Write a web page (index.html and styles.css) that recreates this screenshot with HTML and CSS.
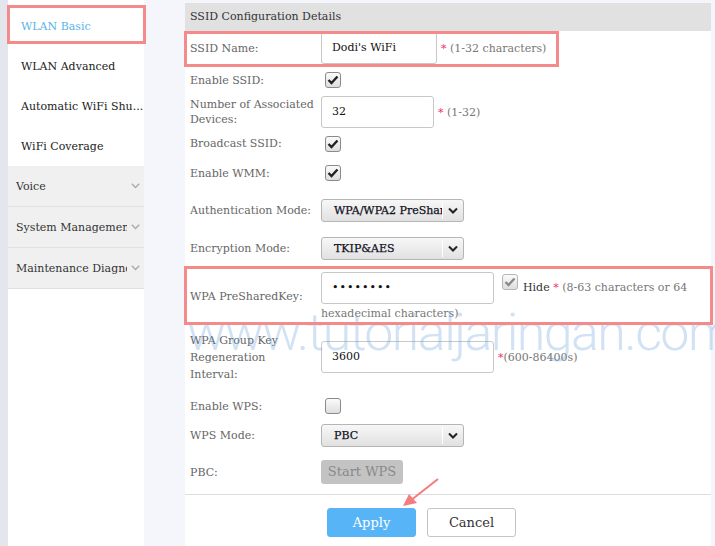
FILE: index.html
```html
<!DOCTYPE html>
<html>
<head>
<meta charset="utf-8">
<link rel="stylesheet" href="styles.css">
</head>
<body>
<div class="page">
  <div class="strip"></div>
  <aside class="sidebar">
    <ul class="sub">
      <li class="active">WLAN Basic</li>
      <li>WLAN Advanced</li>
      <li>Automatic WiFi Shu...</li>
      <li>WiFi Coverage</li>
    </ul>
    <div class="group"><span class="gname">Voice</span><svg class="gchev" width="9" height="6" viewBox="0 0 9 6"><path d="M0.8 0.8 L4.5 4.6 L8.2 0.8" fill="none" stroke="#aaa" stroke-width="1.4"/></svg></div>
    <div class="group"><span class="gname">System Management</span><svg class="gchev" width="9" height="6" viewBox="0 0 9 6"><path d="M0.8 0.8 L4.5 4.6 L8.2 0.8" fill="none" stroke="#aaa" stroke-width="1.4"/></svg></div>
    <div class="group"><span class="gname">Maintenance Diagnosis</span><svg class="gchev" width="9" height="6" viewBox="0 0 9 6"><path d="M0.8 0.8 L4.5 4.6 L8.2 0.8" fill="none" stroke="#aaa" stroke-width="1.4"/></svg></div>
  </aside>
  <main class="panel">
    <div class="panel-head">SSID Configuration Details</div>

    <div class="row r1">
      <div class="label">SSID Name:</div>
      <div class="ctl"><span class="input w116">Dodi's WiFi</span><span class="hint"><span class="req">*</span> (1-32 characters)</span></div>
    </div>
    <div class="row r2">
      <div class="label">Enable SSID:</div>
      <div class="ctl"><span class="cb"><svg width="14" height="14" viewBox="0 0 14 14"><path d="M2.5 7 L5.5 10 L11.5 3.5" fill="none" stroke="#222" stroke-width="2.4"/></svg></span></div>
    </div>
    <div class="row r3">
      <div class="label l15">Number of Associated Devices:</div>
      <div class="ctl"><span class="input w113">32</span><span class="hint"><span class="req">*</span> (1-32)</span></div>
    </div>
    <div class="row r4">
      <div class="label">Broadcast SSID:</div>
      <div class="ctl"><span class="cb"><svg width="14" height="14" viewBox="0 0 14 14"><path d="M2.5 7 L5.5 10 L11.5 3.5" fill="none" stroke="#222" stroke-width="2.4"/></svg></span></div>
    </div>
    <div class="row r5">
      <div class="label">Enable WMM:</div>
      <div class="ctl"><span class="cb"><svg width="14" height="14" viewBox="0 0 14 14"><path d="M2.5 7 L5.5 10 L11.5 3.5" fill="none" stroke="#222" stroke-width="2.4"/></svg></span></div>
    </div>
    <div class="row r6">
      <div class="label">Authentication Mode:</div>
      <div class="ctl"><span class="select"><span class="sval">WPA/WPA2 PreSharedKey</span><span class="sarrow"><svg width="10" height="7" viewBox="0 0 10 7"><path d="M1 1.5 L5 5.5 L9 1.5" fill="none" stroke="#222" stroke-width="2"/></svg></span></span></div>
    </div>
    <div class="row r7">
      <div class="label">Encryption Mode:</div>
      <div class="ctl"><span class="select"><span class="sval">TKIP&amp;AES</span><span class="sarrow"><svg width="10" height="7" viewBox="0 0 10 7"><path d="M1 1.5 L5 5.5 L9 1.5" fill="none" stroke="#222" stroke-width="2"/></svg></span></span></div>
    </div>
    <div class="row r8">
      <div class="label">WPA PreSharedKey:</div>
      <div class="flow"><span class="input w173 dots">••••••••</span><span class="cb dis"><svg width="14" height="14" viewBox="0 0 14 14"><path d="M2.5 7 L5.5 10 L11.5 3.5" fill="none" stroke="#8a8a8a" stroke-width="2.4"/></svg></span><span class="hide">Hide</span> <span class="req">*</span><span class="hint"> (8-63 characters or 64 hexadecimal characters)</span></div>
    </div>
    <div class="row r9">
      <div class="label l17 narrow">WPA Group Key Regeneration Interval:</div>
      <div class="ctl"><span class="input w173">3600</span><span class="hint"><span class="req">*</span>(600-86400s)</span></div>
    </div>
    <div class="row r10">
      <div class="label">Enable WPS:</div>
      <div class="ctl"><span class="cb"></span></div>
    </div>
    <div class="row r11">
      <div class="label">WPS Mode:</div>
      <div class="ctl"><span class="select"><span class="sval">PBC</span><span class="sarrow"><svg width="10" height="7" viewBox="0 0 10 7"><path d="M1 1.5 L5 5.5 L9 1.5" fill="none" stroke="#222" stroke-width="2"/></svg></span></span></div>
    </div>
    <div class="row r12">
      <div class="label">PBC:</div>
      <div class="ctl"><span class="btn-dis">Start WPS</span></div>
    </div>
    <div class="footer">
      <span class="btn apply">Apply</span>
      <span class="btn cancel">Cancel</span>
    </div>
  </main>
</div>

<div class="watermark">www.tutorialjaringan.com</div>
<div class="mark m1"></div>
<div class="mark m2"></div>
<div class="mark m3"></div>
<svg class="arrow" width="44" height="36" viewBox="0 0 44 36"><path d="M38 3 L10 25" stroke="#f47c7c" stroke-width="2" fill="none"/><polygon points="3,30 9,18 17,27" fill="#f47c7c"/></svg>
</body>
</html>
```
FILE: styles.css
```css
* { box-sizing: border-box; }
html, body { margin: 0; padding: 0; }
body {
  background: #f4f6fb;
  font-family: "DejaVu Serif", serif;
  font-size: 11px;
  width: 715px;
  height: 546px;
  overflow: hidden;
  position: relative;
}
.page { display: flex; height: 546px; }
.strip { width: 8px; background: #e3e7ed; flex: none; }
.sidebar { width: 136px; background: #fff; flex: none; padding-top: 7px; }
.sub { list-style: none; margin: 0; padding: 0; }
.sub li {
  height: 40px; line-height: 40px; padding-left: 13px;
  color: #222; white-space: nowrap; overflow: hidden;
}
.sub li.active { color: #5ab4e8; }
.group {
  height: 41px; background: #f0f0f0; border-bottom: 1px solid #e0e0e0;
  display: flex; align-items: center; padding-left: 8px; color: #333;
}
.group:first-of-type { margin-top: -1px; }
.gname { width: 111px; white-space: nowrap; overflow: hidden; }
.gchev { margin-left: 4px; }
.panel {
  width: 526px; margin-left: 41px; margin-top: 3px; background: #fff; flex: none;
}
.panel-head {
  height: 28px; line-height: 28px; background: #e1e1e1; padding-left: 5px;
  color: #333; margin-bottom: 1px;
}
.row { display: grid; grid-template-columns: 136px 1fr; align-items: center; }
.label { padding-left: 5px; color: #666; line-height: 15px; padding-right: 2px; }
.label.narrow { padding-right: 12px; }
.l15 { line-height: 15px; }
.l17 { line-height: 17px; }
.ctl { display: flex; align-items: center; }
.r1 { height: 32px; }
.r2 { height: 32px; }
.r3 { height: 32px; }
.r4 { height: 31px; }
.r5 { height: 28px; }
.r6 { height: 47px; }
.r7 { height: 28px; }
.r8 { height: 68px; align-items: start; }
.r8 .label { align-self: center; }
.r9 { height: 54px; }
.r10 { height: 28px; margin-top: 8px; }
.r11 { height: 30px; }
.r12 { height: 44px; }
.input {
  display: inline-block; height: 32px; line-height: 30px; border: 1px solid #c8c8c8;
  border-radius: 3px; padding-left: 10px; color: #111; font-size: 11px; background: #fff;
}
.w116 { width: 116px; }
.w113 { width: 113px; }
.w173 { width: 173px; }
.dots { letter-spacing: 1px; font-size: 11px; }
.hint { color: #777; margin-left: 4px; white-space: nowrap; }
.req { color: #f0306a; }
.cb {
  display: inline-block; width: 16px; height: 16px; margin-left: 4px;
  border: 1px solid #8a8a8a; border-radius: 3px;
  background: linear-gradient(#fbfbfb, #dedede);
  vertical-align: middle;
}
.cb svg { display: block; }
.cb.dis { border-color: #b5b5b5; margin-left: 8px; position: relative; top: -6px; }
.select {
  display: inline-flex; width: 143px; height: 23px; border: 1px solid #b5b5b5;
  border-radius: 3px; background: linear-gradient(#f7f7f7, #e1e1e1);
  align-items: center;
}
.sval {
  width: 120px; overflow: hidden; white-space: nowrap; padding-left: 12px;
  color: #111122; font-size: 11px; -webkit-text-stroke: 0.25px #111122;
}
.sarrow {
  height: 17px; border-left: 1px solid #fff; flex: 1; display: flex;
  align-items: center; justify-content: center;
}
.flow { padding-top: 10px; line-height: 20px; color: #777; }
.flow .input { vertical-align: middle; }
.flow .hint { margin-left: 0; white-space: normal; }
.hide { color: #333; margin-left: 5px; }
.btn-dis {
  display: inline-block; width: 82px; height: 24px; line-height: 24px; text-align: center;
  background: #c3c3c3; color: #8a8a8a; border-radius: 3px; font-size: 13px;
}
.footer {
  border-top: 1px solid #ddd; padding-top: 13px; display: flex; gap: 11px;
  padding-left: 142px;
}
.btn {
  display: inline-block; width: 89px; height: 29px; line-height: 27px; text-align: center;
  border-radius: 3px; font-size: 13px;
}
.apply { background: #57b5f7; color: #fff; border: 1px solid #57b5f7; }
.cancel { background: #fff; color: #333; border: 1px solid #c4c4c4; }
.watermark {
  position: absolute; left: 187px; top: 302px; width: 528px; overflow: hidden;
  font-family: Roboto, sans-serif; font-weight: 300; font-size: 52px; letter-spacing: -1.6px;
  color: rgba(100, 160, 220, 0.3); white-space: nowrap; pointer-events: none;
}
.mark { position: absolute; border: 3px solid #f58a8a; pointer-events: none; }
.m1 { left: 7px; top: 5px; width: 139px; height: 39px; }
.m2 { left: 184px; top: 31px; width: 375px; height: 36px; }
.m3 { left: 184px; top: 266px; width: 529px; height: 59px; }
.arrow { position: absolute; left: 400px; top: 476px; }
```
